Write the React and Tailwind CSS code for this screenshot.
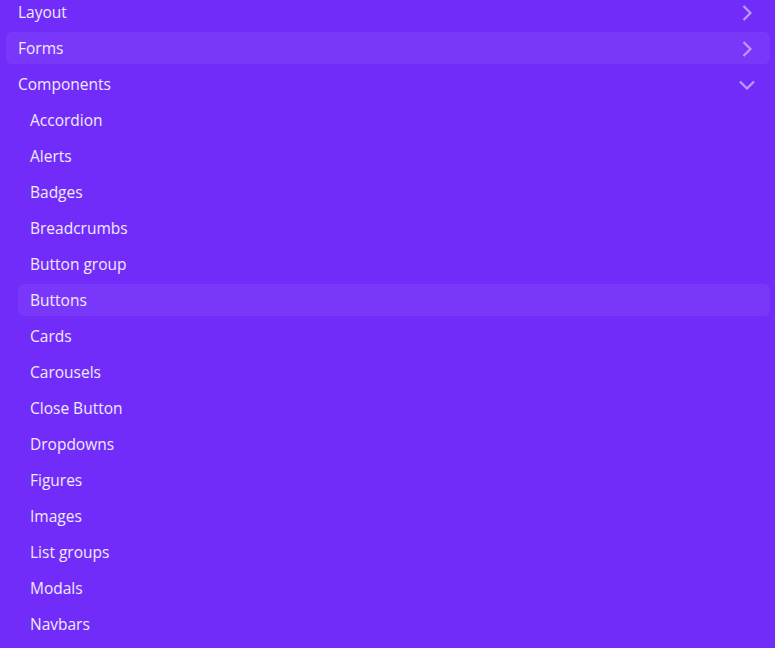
const items = [
  'Accordion',
  'Alerts',
  'Badges',
  'Breadcrumbs',
  'Button group',
  'Buttons',
  'Cards',
  'Carousels',
  'Close Button',
  'Dropdowns',
  'Figures',
  'Images',
  'List groups',
  'Modals',
  'Navbars',
];

function Chevron({ open }) {
  return open ? (
    <svg width="16" height="10" viewBox="0 0 16 10" fill="none" className="text-[#bc9bfb]">
      <path d="M1 1.5 L8 8.5 L15 1.5" stroke="currentColor" strokeWidth="2.2" />
    </svg>
  ) : (
    <svg width="10" height="16" viewBox="0 0 10 16" fill="none" className="text-[#bc9bfb]">
      <path d="M1.5 1 L8.5 8 L1.5 15" stroke="currentColor" strokeWidth="2.2" />
    </svg>
  );
}

function Row({ label, active, open, hasChevron }) {
  return (
    <div
      className={
        'flex h-8 items-center justify-between rounded-md px-3 pt-0.5 ' +
        (active ? 'bg-white/5' : '')
      }
    >
      <span>{label}</span>
      {hasChevron && (
        <span className="mr-[3px] flex w-4 items-center justify-center">
          <Chevron open={open} />
        </span>
      )}
    </div>
  );
}

export default function App() {
  return (
    <div
      className="h-[648px] overflow-hidden bg-[#712cf9] text-[15.5px] text-white/90"
      style={{ fontFamily: '"Open Sans", "Noto Sans", sans-serif' }}
    >
      <nav className="-mt-1 flex flex-col gap-1 pl-[6px] pr-[5px]">
        <Row label="Layout" hasChevron />
        <Row label="Forms" hasChevron active />
        <Row label="Components" hasChevron open />
        <div className="flex flex-col gap-1 pl-3">
          {items.map((it) => (
            <Row key={it} label={it} active={it === 'Buttons'} />
          ))}
        </div>
      </nav>
    </div>
  );
}
